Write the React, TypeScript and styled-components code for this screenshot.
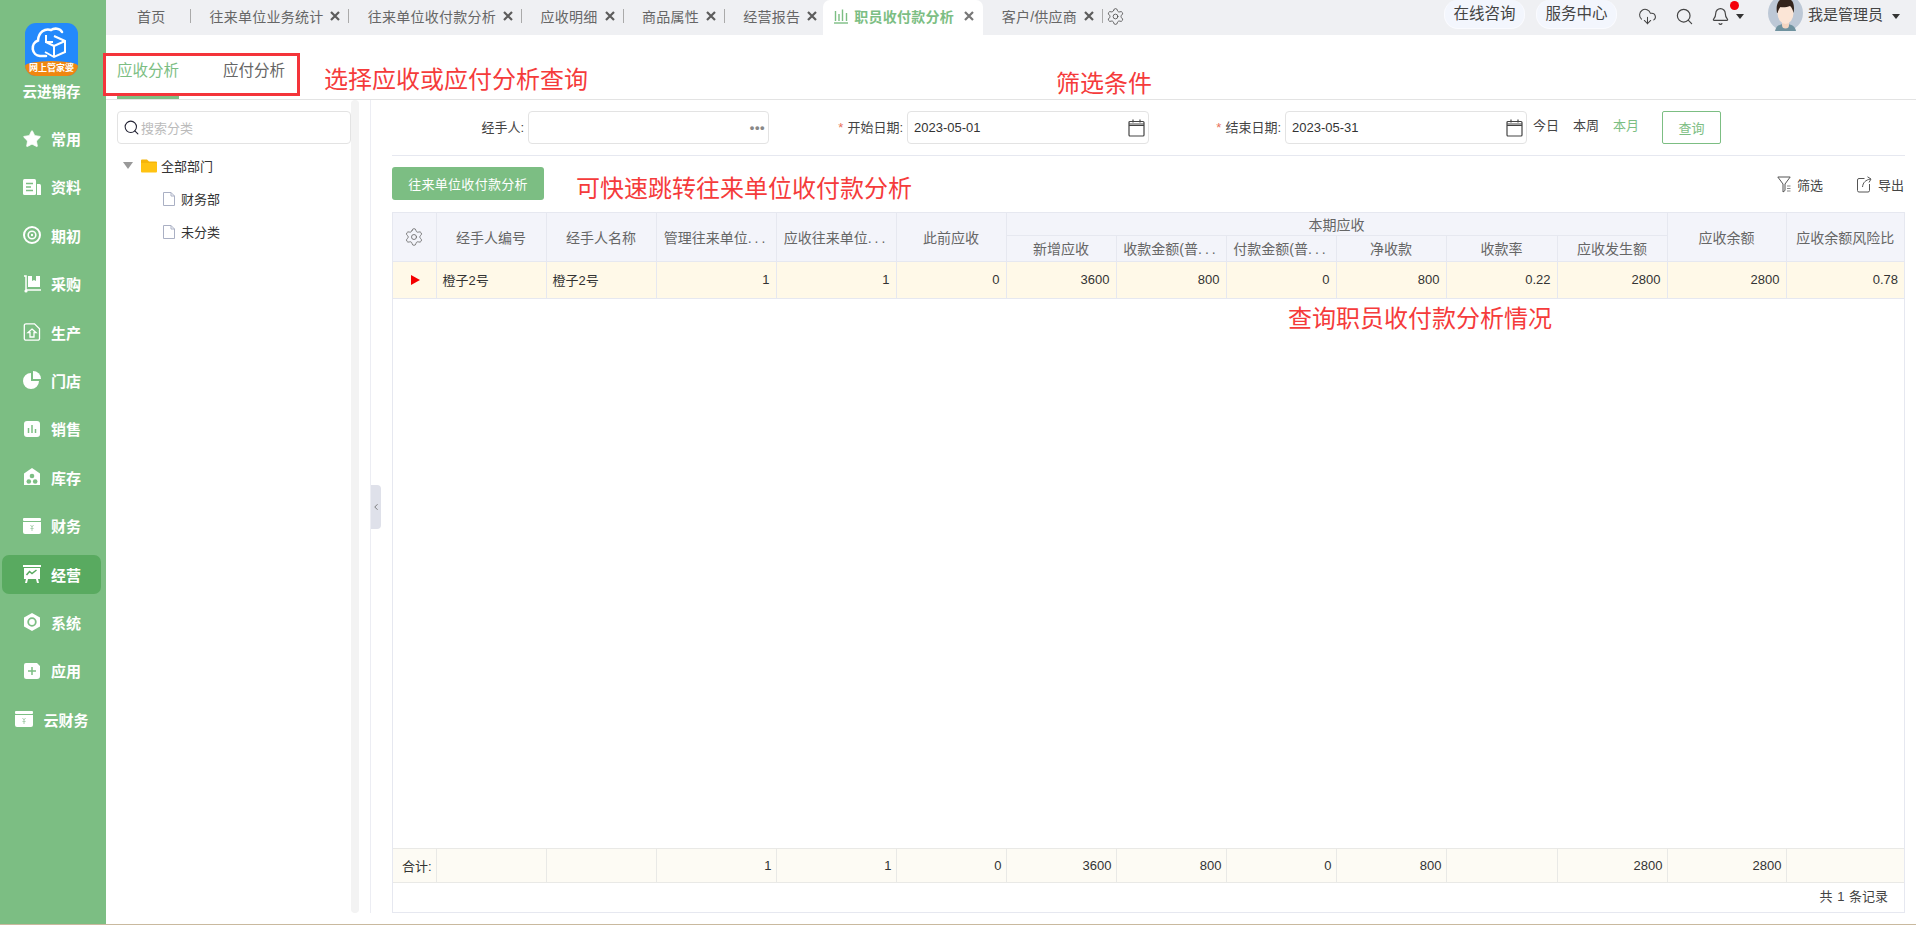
import React from "react";
import styled, { createGlobalStyle } from "styled-components";
import { Bell, ChevronLeft, CloudDownload, Search, Settings, Star } from "lucide-react";

const GREEN = "#7cbe83";
const LINE = "#e6e8f0";

const GlobalStyle = createGlobalStyle`
  html, body {
    margin: 0;
    padding: 0;
    height: 100%;
    overflow: hidden;
    background: #fff;
    font-family: "Liberation Sans", "Noto Sans CJK SC", sans-serif;
    font-size: 13px;
    color: #333;
  }
  * { box-sizing: border-box; }
`;

const Page = styled.div`
  position: relative;
  display: flex;
  width: 1916px;
  height: 925px;
  border-bottom: 1px solid #c9b99e;
  overflow: hidden;
`;

//#region sidebar

const Sidebar = styled.nav`
  width: 106px;
  flex: none;
  background: ${GREEN};
  display: flex;
  flex-direction: column;
  align-items: center;
  padding-top: 23px;
`;

const LogoBox = styled.div`
  width: 53px;
  height: 53px;
  margin-left: -3px;
  border-radius: 11px;
  background: #2389fb;
  overflow: hidden;
  display: flex;
  flex-direction: column;
  align-items: center;
`;

const LogoBand = styled.div`
  width: 100%;
  height: 15px;
  background: #f0870f;
  border-radius: 50% 50% 0 0 / 5px 5px 0 0;
  color: #fff;
  font-size: 9px;
  line-height: 15px;
  font-weight: 700;
  text-align: center;
  white-space: nowrap;
`;

const Brand = styled.div`
  margin: 6px 0 17px -3px;
  height: 20px;
  line-height: 20px;
  color: #fff;
  font-size: 14.500px;
  font-weight: 700;
`;

const NavList = styled.div`
  display: flex;
  flex-direction: column;
  gap: 9.4px;
  width: 99px;
  margin-left: -3px;
`;

const NavItem = styled.div<{ $active?: boolean }>`
  height: 39px;
  padding-left: 1px;
  border-radius: 7px;
  display: flex;
  align-items: center;
  justify-content: center;
  gap: 10px;
  color: #fff;
  font-size: 15px;
  font-weight: 700;
  background: ${(p) => (p.$active ? "#59aa60" : "transparent")};
`;

const StarIcon = styled(Star)`
  margin: -1px;
`;

const BoxGlyph = () => (
  <>
    <rect x="0" y="1" width="18" height="3" rx="1" fill="#fff" />
    <path d="M0 5h18v10a2 2 0 0 1-2 2H2a2 2 0 0 1-2-2z" fill="#fff" />
    <path d="M7.500 8l1.500 2 1.500-2M9 10v4M7.500 11.500h3" stroke="#a9cfae" strokeWidth="1" fill="none" />
  </>
);

const navIcons: Record<string, React.ReactNode> = {
  常用: <StarIcon size={20} fill="#fff" color="#fff" strokeWidth={1} />,
  资料: (
    <svg width="18" height="18" viewBox="0 0 18 18">
      <rect x="0" y="1" width="13" height="16" rx="1.500" fill="#fff" />
      <path d="M14 6h2.500a1.500 1.500 0 0 1 1.500 1.500V17h-4z" fill="#fff" />
      <path d="M3 5.500h7M3 9h5M3 12.500h7" stroke={GREEN} strokeWidth="1.500" />
    </svg>
  ),
  期初: (
    <svg width="18" height="18" viewBox="0 0 18 18">
      <circle cx="9" cy="9" r="8" fill="none" stroke="#fff" strokeWidth="2" />
      <circle cx="9" cy="9" r="3.800" fill="none" stroke="#fff" strokeWidth="1.600" />
      <circle cx="9" cy="9" r="1.200" fill="#fff" />
    </svg>
  ),
  采购: (
    <svg width="18" height="18" viewBox="0 0 18 18">
      <path d="M1 1h2v14h15" fill="none" stroke="#fff" strokeWidth="1.500" />
      <path d="M5 1h12v11H5z" fill="#fff" />
      <path d="M9 1v5l2-1 2 1V1" fill={GREEN} />
      <circle cx="3" cy="16" r="1.600" fill="#fff" />
    </svg>
  ),
  生产: (
    <svg width="18" height="18" viewBox="0 0 18 18">
      <path d="M3 .800h8.500l5 5V15.500A1.700 1.700 0 0 1 14.800 17.200H3A1.700 1.700 0 0 1 1.300 15.500V2.500A1.700 1.700 0 0 1 3 .800z" fill="none" stroke="#fff" strokeWidth="1.300" />
      <path d="M9 6l4 3.500h-2V14H7V9.500H5z" fill="none" stroke="#fff" strokeWidth="1.300" />
    </svg>
  ),
  门店: (
    <svg width="18" height="18" viewBox="0 0 18 18">
      <path d="M8 2a8 8 0 1 0 8 8H8z" fill="#fff" />
      <path d="M10 0a8 8 0 0 1 8 8h-8z" fill="#fff" />
    </svg>
  ),
  销售: (
    <svg width="18" height="18" viewBox="0 0 18 18">
      <rect x="1" y="1" width="16" height="16" rx="3" fill="#fff" />
      <path d="M5.500 8v5M9 5v8M12.500 9v4" stroke={GREEN} strokeWidth="1.500" />
    </svg>
  ),
  库存: (
    <svg width="18" height="18" viewBox="0 0 18 18">
      <path d="M9 0l8 5.500V17H1V5.500z" fill="#fff" />
      <circle cx="9" cy="8" r="2.300" fill={GREEN} />
      <circle cx="5.800" cy="13.500" r="2.300" fill={GREEN} />
      <circle cx="12.200" cy="13.500" r="2.300" fill={GREEN} />
    </svg>
  ),
  财务: (
    <svg width="18" height="18" viewBox="0 0 18 18">
      <BoxGlyph />
    </svg>
  ),
  经营: (
    <svg width="18" height="18" viewBox="0 0 18 18">
      <path d="M0 0h18v2H0zM1 3h16v11H1z" fill="#fff" />
      <path d="M3.500 10l3-3.500 2.500 2L13.500 5" fill="none" stroke="#59aa60" strokeWidth="1.500" />
      <path d="M3 14l-1 4h2l1-4zM15 14l1 4h-2l-1-4z" fill="#fff" />
    </svg>
  ),
  系统: (
    <svg width="18" height="18" viewBox="0 0 18 18">
      <path d="M9 0l8 4.500v9L9 18l-8-4.500v-9z" fill="#fff" />
      <circle cx="9" cy="9" r="3.800" fill="none" stroke={GREEN} strokeWidth="1.800" />
    </svg>
  ),
  应用: (
    <svg width="18" height="18" viewBox="0 0 18 18">
      <path d="M3 1h11l3 3v10a3 3 0 0 1-3 3H3.500A2.500 2.500 0 0 1 1 14.500V3a2 2 0 0 1 2-2z" fill="#fff" />
      <path d="M9 5v8M5 9h8" stroke={GREEN} strokeWidth="1.500" />
    </svg>
  ),
  云财务: (
    <svg width="18" height="18" viewBox="0 0 18 18">
      <BoxGlyph />
    </svg>
  ),
};

const navNames = ["常用", "资料", "期初", "采购", "生产", "门店", "销售", "库存", "财务", "经营", "系统", "应用", "云财务"];

//#endregion

//#region top bar

const Main = styled.div`
  flex: 1;
  min-width: 0;
  display: flex;
  flex-direction: column;
`;

const TopBar = styled.header`
  height: 35px;
  flex: none;
  background: #eff0f3;
  display: flex;
  align-items: stretch;
  padding-left: 12.600px;
  color: #666;
  font-size: 14px;
  letter-spacing: 0.25px;
  white-space: nowrap;
`;

const TabItem = styled.div<{ $last?: boolean }>`
  display: flex;
  align-items: center;
  padding-left: 18.400px;
  padding-right: ${(p) => (p.$last ? "6px" : "0")};
  height: 32px;
`;

const ActiveTab = styled.div`
  width: 160px;
  height: 35px;
  padding: 0 0 3px 11px;
  background: #fff;
  border-radius: 7px 7px 0 0;
  color: ${GREEN};
  font-weight: 700;
  display: flex;
  align-items: center;
  gap: 6px;
`;

const Sep = styled.i<{ $wide?: boolean }>`
  width: 1px;
  height: 14px;
  background: #aaa;
  margin-left: ${(p) => (p.$wide ? "24.600px" : "8px")};
`;

const CloseSvg = styled.svg<{ $active?: boolean }>`
  width: 10px;
  height: 10px;
  flex: none;
  margin-left: ${(p) => (p.$active ? "4px" : "7px")};
  stroke: ${(p) => (p.$active ? "#777" : "#5c5c5c")};
  stroke-width: 2.200;
`;

const Close = ({ $active }: { $active?: boolean }) => (
  <CloseSvg viewBox="0 0 10 10" $active={$active}>
    <path d="M1 1l8 8M9 1l-8 8" />
  </CloseSvg>
);

const TopRight = styled.div`
  margin-left: auto;
  display: flex;
  align-items: flex-start;
  padding-right: 16px;
  color: #444;
`;

const Pill = styled.div`
  width: 81px;
  height: 29px;
  margin-right: 11px;
  line-height: 27px;
  text-align: center;
  font-size: 15.500px;
  letter-spacing: 0;
  color: #444;
  background: #f3f6fd;
  border: 1px solid #fafbff;
  border-top: none;
  border-radius: 14px;
`;

const TopIcon = styled.div<{ $gap: number }>`
  position: relative;
  height: 32px;
  margin-left: ${(p) => p.$gap}px;
  display: flex;
  align-items: center;
  color: #444;
`;

const RedDot = styled.span`
  position: absolute;
  right: -9px;
  top: 1px;
  width: 9px;
  height: 9px;
  border-radius: 50%;
  background: #f4000b;
`;

const Caret = styled.span<{ $gap: number }>`
  width: 0;
  height: 0;
  margin: 14px 0 0 ${(p) => p.$gap}px;
  border-left: 4px solid transparent;
  border-right: 4px solid transparent;
  border-top: 5px solid #333;
`;

const AvatarBox = styled.svg`
  display: block;
  margin-left: 23.500px;
`;

const UserName = styled.span`
  margin-left: 5px;
  line-height: 30px;
  font-size: 15px;
  letter-spacing: 0;
  color: #444;
`;

//#endregion

//#region content

const TabStrip = styled.div`
  height: 65px;
  flex: none;
  display: flex;
  gap: 44px;
  padding-left: 11px;
  border-bottom: 1px solid #e3e3e3;
`;

const AnalysisTab = styled.div<{ $active?: boolean }>`
  height: 64px;
  width: 62px;
  padding-top: 24px;
  font-size: 15.500px;
  line-height: 24px;
  white-space: nowrap;
  color: ${(p) => (p.$active ? GREEN : "#666")};
  border-bottom: 3px solid ${(p) => (p.$active ? GREEN : "transparent")};
`;

const Body = styled.div`
  flex: 1;
  min-height: 0;
  display: flex;
  padding-bottom: 11px;
`;

const TreePanel = styled.aside`
  width: 245px;
  flex: none;
  padding: 11px 0 0 11px;
`;

const SearchBox = styled.div`
  height: 33px;
  border: 1px solid #e3e3e3;
  border-radius: 4px;
  display: flex;
  align-items: center;
  gap: 1px;
  padding-left: 5px;
  color: #bbb;
`;

const TreeList = styled.div`
  margin-top: 5px;
`;

const TreeRow = styled.div<{ $depth: number }>`
  height: 33px;
  display: flex;
  align-items: center;
  padding-left: ${(p) => (p.$depth ? 46 : 6)}px;
  color: #333;
`;

const TreeCaret = styled.span`
  width: 0;
  height: 0;
  margin-right: 8px;
  border-left: 5px solid transparent;
  border-right: 5px solid transparent;
  border-top: 7px solid #999;
`;

const TreeLabel = styled.span<{ $gap: number }>`
  margin-left: ${(p) => p.$gap}px;
`;

const ScrollTrack = styled.div`
  width: 8px;
  flex: none;
  background: #f3f3f3;
  border-radius: 4px;
`;

const Divider = styled.div`
  position: relative;
  width: 1px;
  flex: none;
  margin: 0 21px 0 11px;
  background: #ecedf3;
`;

const CollapseHandle = styled.div`
  position: absolute;
  left: 1px;
  top: 50%;
  transform: translateY(-50%);
  width: 10px;
  height: 44px;
  background: #dfe1ea;
  border-radius: 0 4px 4px 0;
  color: #666;
  display: flex;
  align-items: center;
  justify-content: center;
`;

const Report = styled.section`
  width: 1513px;
  flex: none;
  display: flex;
  flex-direction: column;
`;

const FilterRow = styled.div`
  height: 56px;
  flex: none;
  padding-top: 11px;
  border-bottom: 1px solid ${LINE};
  display: flex;
  align-items: flex-start;
`;

const FieldLabel = styled.label<{ $width: number }>`
  width: ${(p) => p.$width}px;
  height: 33px;
  padding-right: 4px;
  line-height: 33px;
  text-align: right;
  color: #444;
  white-space: nowrap;
`;

const Required = styled.em`
  margin-right: 4px;
  font-style: normal;
  color: #e8705a;
`;

const FieldBox = styled.div<{ $width: number }>`
  width: ${(p) => p.$width}px;
  height: 33px;
  padding: 0 3px 0 6px;
  border: 1px solid #e3e3e3;
  border-radius: 4px;
  display: flex;
  align-items: center;
  justify-content: space-between;
  color: #333;
`;

const Dots = styled.span`
  color: #888;
  font-weight: 700;
  letter-spacing: 0.5px;
`;

const CalendarIcon = () => (
  <svg width="17" height="18" viewBox="0 0 17 18" fill="none" stroke="#444" strokeWidth="1.200">
    <rect x="1" y="2.500" width="15" height="14.500" rx="1" />
    <path d="M1 6.500h15M1 5h15M5 .500v3M12 .500v3" />
  </svg>
);

const QuickLinks = styled.div`
  display: flex;
  gap: 14px;
  margin-left: 6px;
  height: 33px;
  line-height: 30px;
`;

const QuickLink = styled.span<{ $active?: boolean }>`
  color: ${(p) => (p.$active ? GREEN : "#444")};
`;

const QueryButton = styled.button`
  width: 59px;
  height: 33px;
  margin-left: 23px;
  padding: 0;
  background: #fff;
  border: 1px solid ${GREEN};
  border-radius: 2px;
  color: ${GREEN};
  font: inherit;
`;

const ActionRow = styled.div`
  height: 56px;
  flex: none;
  padding-top: 11px;
  display: flex;
  align-items: flex-start;
  justify-content: space-between;
`;

const JumpButton = styled.button`
  width: 152px;
  height: 33px;
  padding: 0;
  background: ${GREEN};
  border: none;
  border-radius: 3px;
  color: #fff;
  font: inherit;
  letter-spacing: 0.3px;
`;

const ToolLinks = styled.div`
  display: flex;
  gap: 34px;
  padding: 8px 1px 0 0;
  color: #444;
`;

const ToolLink = styled.span`
  display: flex;
  align-items: center;
  gap: 6px;
`;

const FunnelIcon = () => (
  <svg width="14" height="17" viewBox="0 0 14 17" fill="none" stroke="#555" strokeWidth="1">
    <path d="M.800 1h12.400L8 8v6.500L6 16V8z" />
    <path d="M10 10h3.500M10 12.500h3.500M10 15h3.500" stroke="#888" />
  </svg>
);

const ExportIcon = () => (
  <svg width="15" height="17" viewBox="0 0 15 17" fill="none" stroke="#555" strokeWidth="1">
    <path d="M7.500 2.500H2A1.500 1.500 0 0 0 .500 4v10.500A1.500 1.500 0 0 0 2 16h9a1.500 1.500 0 0 0 1.500-1.500V8" />
    <path d="M5.500 11c.500-4.500 3-7 8-8M10.500 .800l3.500 2.200-2 3.500" />
  </svg>
);

const TableFrame = styled.div`
  flex: 1;
  min-height: 0;
  display: flex;
  flex-direction: column;
  border: 1px solid ${LINE};
`;

const Grid = styled.table`
  width: 1511px;
  flex: none;
  table-layout: fixed;
  border-collapse: collapse;
`;

const HeadCell = styled.th<{ $h?: number }>`
  height: ${(p) => p.$h ?? 22}px;
  padding: 0 4px;
  background: #f3f4fa;
  border: 1px solid ${LINE};
  border-top: none;
  color: #666;
  font-size: 14px;
  font-weight: 400;
  text-align: center;
  white-space: nowrap;
  overflow: hidden;
  &:first-child { border-left: none; }
  &:last-child { border-right: none; }
  svg { vertical-align: middle; }
`;

const Ellipsis = styled.span`
  letter-spacing: 3px;
`;

const DataCell = styled.td<{ $left?: boolean }>`
  height: 37px;
  padding: 0 6px;
  background: #fff9e8;
  border: 1px solid ${LINE};
  border-top: none;
  color: #333;
  text-align: ${(p) => (p.$left ? "left" : "right")};
  white-space: nowrap;
  &:first-child { border-left: none; padding-left: 8px; }
  &:last-child { border-right: none; }
`;

const RowMark = styled.span`
  display: block;
  width: 0;
  height: 0;
  margin: 0 auto;
  border-top: 5px solid transparent;
  border-bottom: 5px solid transparent;
  border-left: 9px solid #f40000;
`;

const TableFill = styled.div`
  flex: 1;
  min-height: 0;
`;

const FootCell = styled.td<{ $center?: boolean }>`
  height: 34px;
  padding: 0 4px;
  background: #fdfbf4;
  border: 1px solid #e9e9e6;
  text-align: right;
  color: #333;
  white-space: nowrap;
  &:first-child { border-left: none; }
  &:last-child { border-right: none; }
`;

const Pager = styled.div`
  height: 29px;
  flex: none;
  padding-right: 16px;
  line-height: 28px;
  text-align: right;
  color: #444;
  word-spacing: 1px;
`;

//#endregion

//#region annotations

const Callout = styled.div<{ $left: number; $top: number }>`
  position: absolute;
  left: ${(p) => p.$left}px;
  top: ${(p) => p.$top}px;
  line-height: 30px;
  font-size: 24px;
  color: #f53b3b;
  white-space: nowrap;
`;

const TabHighlight = styled.div`
  position: absolute;
  left: 103px;
  top: 53px;
  width: 197px;
  height: 43px;
  border: 3px solid #f4343a;
`;

//#endregion

const colWidths = [43, 110, 110, 120, 120, 110, 110, 110, 110, 110, 111, 110, 119, 118];

const Cols = () => (
  <colgroup>
    {colWidths.map((w, i) => (
      <col key={i} width={w} />
    ))}
  </colgroup>
);

const rowValues = ["1", "1", "0", "3600", "800", "0", "800", "0.22", "2800", "2800", "0.78"];
const footValues = ["1", "1", "0", "3600", "800", "0", "800", "", "2800", "2800", ""];
const leadHeads = ["经手人编号", "经手人名称", "管理往来单位...", "应收往来单位...", "此前应收"];
const subHeads = ["新增应收", "收款金额(普...", "付款金额(普...", "净收款", "收款率", "应收发生额"];

const tabs = [
  { name: "往来单位业务统计" },
  { name: "往来单位收付款分析" },
  { name: "应收明细" },
  { name: "商品属性" },
];

const headText = (h: string) =>
  h.endsWith("...") ? (
    <>
      {h.slice(0, -3)}
      <Ellipsis>...</Ellipsis>
    </>
  ) : (
    h
  );

const FolderIcon = () => (
  <svg width="16" height="14" viewBox="0 0 16 14">
    <path d="M0 1.500A1 1 0 0 1 1 .500h5l2 2h7a1 1 0 0 1 1 1V5H0z" fill="#f5b50a" />
    <path d="M0 4h16v8.500a1 1 0 0 1-1 1H1a1 1 0 0 1-1-1z" fill="#ffc312" />
  </svg>
);

const DocIcon = () => (
  <svg width="12" height="14" viewBox="0 0 12 14">
    <path d="M.500.500h7.500l3.500 3.500v9.500H.500z" fill="#fff" stroke="#aab0c4" />
    <path d="M8 .500V4h3.500" fill="none" stroke="#aab0c4" />
  </svg>
);

const TrendIcon = () => (
  <svg width="14" height="16" viewBox="0 0 14 16">
    <path d="M1.500 3v10M5 6v7M8.500 1.500V13M12.500 5v8" stroke={GREEN} strokeWidth="1.400" fill="none" />
    <path d="M0 15h14" stroke={GREEN} strokeWidth="1.400" />
  </svg>
);

const Avatar = () => (
  <AvatarBox width="35" height="31" viewBox="0 0 35 31">
    <ellipse cx="17.500" cy="13" rx="17.500" ry="18" fill="#bdc8d6" />
    <path d="M7 31c1-6 6-7 10.500-7S27 25 28 31z" fill="#6f929f" />
    <path d="M14 20h7v5a3.500 3.500 0 0 1-7 0z" fill="#f4d6c2" />
    <ellipse cx="17.500" cy="13" rx="8" ry="11" fill="#fbe5d6" />
    <path d="M9 13C7.500 5 11 0 12 0h11c2 1 4 6 2.500 13-1-4-2-6-3.500-7-3 1.500-8 1.500-9.500 1-1 1-2 3-3 6z" fill="#33241c" />
  </AvatarBox>
);

export default function App() {
  return (
    <Page>
      <GlobalStyle />
      <Sidebar>
        <LogoBox>
          <svg width="53" height="38" viewBox="0 0 53 38">
            <path
              d="M21 33H15a8 8 0 0 1-2-15.500C13.500 9 20 5 26 7c3-2 9-2 11 2"
              fill="none"
              stroke="#fff"
              strokeWidth="2.600"
              strokeLinecap="round"
            />
            <path d="M29 13l11 5v11l-11 5-9-5" fill="none" stroke="#fff" strokeWidth="2" />
            <path d="M29 23l11-5M29 23v11M29 23l-8-4M21 12v7h7" fill="none" stroke="#fff" strokeWidth="2" />
          </svg>
          <LogoBand>网上管家婆</LogoBand>
        </LogoBox>
        <Brand>云进销存</Brand>
        <NavList>
          {navNames.map((name) => (
            <NavItem key={name} $active={name === "经营"}>
              {navIcons[name]}
              <span>{name}</span>
            </NavItem>
          ))}
        </NavList>
      </Sidebar>

      <Main>
        <TopBar>
          <TabItem>
            首页
            <Sep $wide />
          </TabItem>
          {tabs.map((t) => (
            <TabItem key={t.name}>
              {t.name}
              <Close />
              <Sep />
            </TabItem>
          ))}
          <TabItem $last>
            经营报告
            <Close />
          </TabItem>
          <ActiveTab>
            <TrendIcon />
            职员收付款分析
            <Close $active />
          </ActiveTab>
          <TabItem>
            客户/供应商
            <Close />
            <Sep />
          </TabItem>
          <TopIcon $gap={3}>
            <Settings size={19} strokeWidth={1} />
          </TopIcon>
          <TopRight>
            <Pill>在线咨询</Pill>
            <Pill>服务中心</Pill>
            <TopIcon $gap={10}>
              <CloudDownload size={19} strokeWidth={1.300} />
            </TopIcon>
            <TopIcon $gap={18}>
              <Search size={19} strokeWidth={1.500} />
            </TopIcon>
            <TopIcon $gap={17}>
              <Bell size={19} strokeWidth={1.500} />
              <RedDot />
            </TopIcon>
            <Caret $gap={6.500} />
            <Avatar />
            <UserName>我是管理员</UserName>
            <Caret $gap={9} />
          </TopRight>
        </TopBar>

        <TabStrip>
          <AnalysisTab $active>应收分析</AnalysisTab>
          <AnalysisTab>应付分析</AnalysisTab>
        </TabStrip>

        <Body>
          <TreePanel>
            <SearchBox>
              <Search size={17} color="#223" strokeWidth={1.500} />
              搜索分类
            </SearchBox>
            <TreeList>
              <TreeRow $depth={0}>
                <TreeCaret />
                <FolderIcon />
                <TreeLabel $gap={4}>全部部门</TreeLabel>
              </TreeRow>
              <TreeRow $depth={1}>
                <DocIcon />
                <TreeLabel $gap={6}>财务部</TreeLabel>
              </TreeRow>
              <TreeRow $depth={1}>
                <DocIcon />
                <TreeLabel $gap={6}>未分类</TreeLabel>
              </TreeRow>
            </TreeList>
          </TreePanel>
          <ScrollTrack />
          <Divider>
            <CollapseHandle>
              <ChevronLeft size={10} strokeWidth={2} />
            </CollapseHandle>
          </Divider>

          <Report>
            <FilterRow>
              <FieldLabel $width={136}>经手人:</FieldLabel>
              <FieldBox $width={241}>
                <span />
                <Dots>•••</Dots>
              </FieldBox>
              <FieldLabel $width={138}>
                <Required>*</Required>开始日期:
              </FieldLabel>
              <FieldBox $width={242}>
                2023-05-01
                <CalendarIcon />
              </FieldBox>
              <FieldLabel $width={136}>
                <Required>*</Required>结束日期:
              </FieldLabel>
              <FieldBox $width={242}>
                2023-05-31
                <CalendarIcon />
              </FieldBox>
              <QuickLinks>
                <QuickLink>今日</QuickLink>
                <QuickLink>本周</QuickLink>
                <QuickLink $active>本月</QuickLink>
              </QuickLinks>
              <QueryButton>查询</QueryButton>
            </FilterRow>

            <ActionRow>
              <JumpButton>往来单位收付款分析</JumpButton>
              <ToolLinks>
                <ToolLink>
                  <FunnelIcon />
                  筛选
                </ToolLink>
                <ToolLink>
                  <ExportIcon />
                  导出
                </ToolLink>
              </ToolLinks>
            </ActionRow>

            <TableFrame>
              <Grid>
                <Cols />
                <thead>
                  <tr>
                    <HeadCell rowSpan={2}>
                      <Settings size={20} strokeWidth={1} />
                    </HeadCell>
                    {leadHeads.map((h) => (
                      <HeadCell key={h} rowSpan={2}>
                        {headText(h)}
                      </HeadCell>
                    ))}
                    <HeadCell colSpan={6}>本期应收</HeadCell>
                    <HeadCell rowSpan={2}>应收余额</HeadCell>
                    <HeadCell rowSpan={2}>应收余额风险比</HeadCell>
                  </tr>
                  <tr>
                    {subHeads.map((h) => (
                      <HeadCell key={h} $h={26}>
                        {headText(h)}
                      </HeadCell>
                    ))}
                  </tr>
                </thead>
                <tbody>
                  <tr>
                    <DataCell>
                      <RowMark />
                    </DataCell>
                    <DataCell $left>橙子2号</DataCell>
                    <DataCell $left>橙子2号</DataCell>
                    {rowValues.map((v, i) => (
                      <DataCell key={i}>{v}</DataCell>
                    ))}
                  </tr>
                </tbody>
              </Grid>
              <TableFill />
              <Grid>
                <Cols />
                <tbody>
                  <tr>
                    <FootCell>合计:</FootCell>
                    <FootCell />
                    <FootCell />
                    {footValues.map((v, i) => (
                      <FootCell key={i}>{v}</FootCell>
                    ))}
                  </tr>
                </tbody>
              </Grid>
              <Pager>共 1 条记录</Pager>
            </TableFrame>
          </Report>
        </Body>
      </Main>

      <TabHighlight />
      <Callout $left={324} $top={65}>选择应收或应付分析查询</Callout>
      <Callout $left={1056} $top={69}>筛选条件</Callout>
      <Callout $left={576} $top={174}>可快速跳转往来单位收付款分析</Callout>
      <Callout $left={1288} $top={304}>查询职员收付款分析情况</Callout>
    </Page>
  );
}
